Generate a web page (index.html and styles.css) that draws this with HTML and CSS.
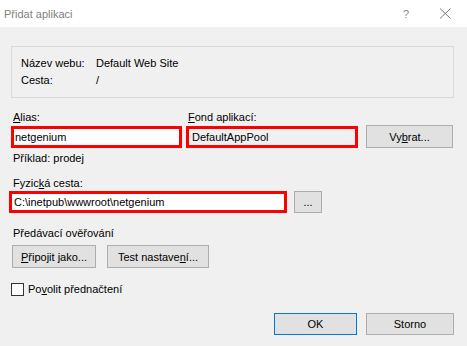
FILE: index.html
```html
<!DOCTYPE html>
<html lang="cs">
<head>
<meta charset="utf-8">
<title>Přidat aplikaci</title>
<link rel="stylesheet" href="styles.css">
</head>
<body>
<div class="win">
  <div class="titlebar">
    <span class="title">Přidat aplikaci</span>
    <span class="help">?</span>
    <svg class="close" width="13" height="11" viewBox="0 0 13 11"><path d="M1 0.5 L11.5 10.5 M11.5 0.5 L1 10.5" stroke="#7a7a7a" stroke-width="1" fill="none"/></svg>
  </div>
  <div class="content">
    <div class="info">
      <div class="info-row"><span class="key">Název webu:</span><span>Default Web Site</span></div>
      <div class="info-row"><span class="key">Cesta:</span><span>/</span></div>
    </div>

    <div class="pool-grid">
      <span class="lbl"><u>A</u>lias:</span>
      <span class="lbl"><u>F</u>ond aplikací:</span>
      <span></span>
      <div class="field marked">netgenium</div>
      <div class="field marked readonly">DefaultAppPool</div>
      <div class="btn btn-pick">Vy<u>b</u>rat...</div>
    </div>

    <div class="hint">Příklad: prodej</div>

    <div class="lbl path-lbl">Fyzic<u>k</u>á cesta:</div>
    <div class="path-row">
      <div class="field marked path">C:\inetpub\wwwroot\netgenium</div>
      <div class="btn btn-dots">...</div>
    </div>

    <div class="lbl section">Předávací ověřování</div>
    <div class="auth-row">
      <div class="btn btn-connect"><u>P</u>řipojit jako...</div>
      <div class="btn btn-test">Test nastave<u>n</u>í...</div>
    </div>

    <div class="check-row">
      <span class="checkbox"></span>
      <span>Po<u>v</u>olit přednačtení</span>
    </div>

    <div class="footer">
      <div class="btn btn-ok">OK</div>
      <div class="btn btn-cancel">Storno</div>
    </div>
  </div>
</div>
</body>
</html>
```

FILE: styles.css
```css
* { box-sizing: border-box; }
html, body { margin: 0; padding: 0; }
body {
  width: 467px;
  height: 346px;
  overflow: hidden;
  background: #f0f0f0;
  font-family: "Liberation Sans", Arial, sans-serif;
  font-size: 11px;
  color: #000;
}
u { text-decoration: underline; text-underline-offset: 1px; }

.titlebar {
  height: 27px;
  background: #fff;
  display: flex;
  align-items: center;
}
.title {
  margin-left: 4px;
  color: #7f7f7f;
  font-size: 11px;
  flex: 1;
}
.help {
  color: #8a8a8a;
  font-size: 11px;
  margin-right: 30px;
}
.close { margin-right: 15px; }

.content {
  padding: 0 13px 0 11px;
}

.info {
  margin-top: 19px;
  height: 52px;
  border: 1px solid #dadada;
  padding: 8px 0 0 9px;
}
.info-row {
  display: flex;
  line-height: 17px;
}
.key { width: 75px; }

.lbl { line-height: 16px; padding-left: 2px; }

.pool-grid {
  margin-top: 11px;
  display: grid;
  grid-template-columns: 171px 172px 91px;
  column-gap: 4px;
  row-gap: 1px;
}
.pool-grid .btn-pick { margin-left: 4px; margin-top: -1px; height: 23px; }

.field {
  height: 22px;
  background: #fff;
  border: 1px solid #7a7a7a;
  line-height: 16px;
  padding-left: 1px;
  white-space: nowrap;
  overflow: hidden;
}
.field.marked { border: 3px solid #f00; }
.field.readonly { background: #f0f0f0; padding-left: 3px; }

.btn {
  height: 22px;
  background: #e1e1e1;
  border: 1px solid #adadad;
  display: flex;
  align-items: center;
  justify-content: center;
  white-space: nowrap;
}

.hint {
  margin-top: 2px;
  line-height: 16px;
  padding-left: 2px;
}

.path-lbl { margin-top: 9px; }
.path-row {
  display: flex;
  gap: 7px;
  margin-left: -2px;
}
.field.path { width: 278px; padding-left: 2px; }
.btn-dots { width: 28px; }

.section { margin-top: 12px; }
.auth-row {
  margin-top: 4px;
  display: flex;
  gap: 11px;
  margin-left: 1px;
}
.btn-connect { width: 84px; height: 23px; }
.btn-test { width: 102px; height: 23px; }

.check-row {
  margin-top: 13px;
  display: flex;
  align-items: center;
  line-height: 16px;
  gap: 4px;
}
.checkbox {
  width: 13px;
  height: 13px;
  background: #fff;
  border: 1px solid #333;
}

.footer {
  margin-top: 16px;
  display: flex;
  justify-content: flex-end;
  gap: 9px;
}
.btn-ok { width: 83px; border-color: #0078d7; }
.btn-cancel { width: 88px; }
```
